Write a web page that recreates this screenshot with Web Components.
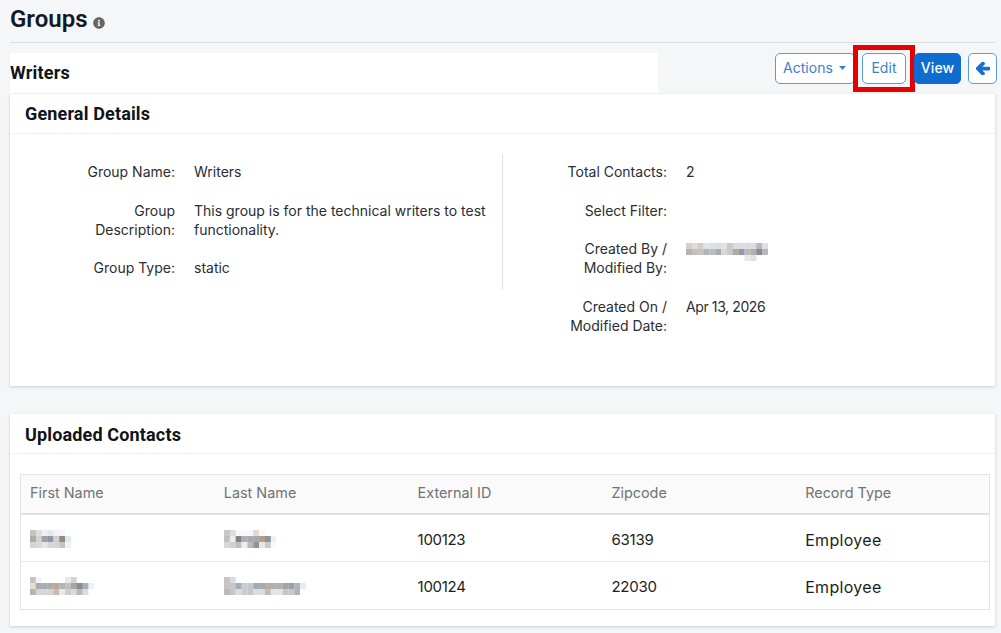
<!DOCTYPE html>
<html><head><meta charset="utf-8">
<style>
html,body{margin:0;padding:0;background:#f5f6f8;height:633px;overflow:hidden}
body{font-family:"Inter","Open Sans",sans-serif}
</style></head><body>
<template id="t-page"><style>
:host{display:block;padding:0 6px 0 10px}
.head{height:42px;border-bottom:1px solid #dcdde0;display:flex;align-items:flex-start;gap:6px}
h1{margin:3px 0 0;font:600 24px/32px Roboto,sans-serif;color:#111827}
.sub{display:flex;margin-top:10px;height:40px;justify-content:space-between;align-items:flex-start}
.title{width:648px;height:40px;background:#fff;display:flex;align-items:center;font:700 18px/22px Roboto,sans-serif;color:#101418;letter-spacing:.2px}
.btns{display:flex;align-items:center;margin-right:-2px}
svg.i{margin-top:17px}
</style>
<div class="head"><h1>Groups</h1><svg class="i" width="12" height="12" viewBox="0 0 512 512"><path fill="#666" d="M256 8C119 8 8 119 8 256s111 248 248 248 248-111 248-248S393 8 256 8zm0 110a42 42 0 1 1 0 84 42 42 0 0 1 0-84zm56 254c0 7-5 12-12 12h-88c-7 0-12-5-12-12v-24c0-7 5-12 12-12h12v-64h-12c-7 0-12-5-12-12v-24c0-7 5-12 12-12h64c7 0 12 5 12 12v100h12c7 0 12 5 12 12z"/></svg></div>
<div class="sub"><div class="title"><slot name="title"></slot></div><div class="btns"><slot name="btns"></slot></div></div>
<slot></slot></template>

<template id="t-btn"><style>
:host{display:inline-flex;position:relative;align-items:center;justify-content:center;box-sizing:border-box;height:31px;padding-bottom:1px;border:1px solid #5b9bdc;border-radius:5px;background:#fff;color:#3a7fd0;font:400 14px/1 Inter,sans-serif;letter-spacing:.05px}
:host([primary]){background:#0f6cd0;border-color:#0f6cd0;color:#fff;font-weight:500}
:host([mark])::after{content:"";position:absolute;left:-10px;right:-10px;top:-9px;bottom:-9px;border:5px solid #e60000;pointer-events:none}
</style><slot></slot></template>

<template id="t-card"><style>
:host{display:block;background:#fff;box-shadow:0 1px 3px rgba(0,0,0,.18)}
.h{height:39px;border-bottom:1px solid #eef0f2;padding-left:15px;display:flex;align-items:center;font:700 18px/24px Roboto,sans-serif;color:#101418;letter-spacing:.15px}
</style><div class="h"><slot name="h"></slot></div><slot></slot></template>

<template id="t-row"><style>
:host{display:grid;grid-template-columns:165px 1fr;column-gap:19px;font:400 14px/19px Inter,sans-serif;color:#2a2d33;margin-bottom:var(--mb,20px)}
.l{text-align:right}
.v{min-height:19px}
</style><div class="l"><slot name="l"></slot></div><div class="v"><slot></slot></div></template>

<template id="t-px"><style>:host{display:inline-block;line-height:0;vertical-align:top}svg{display:block}</style><svg></svg></template>

<template id="t-table"><style>
:host{display:block;margin:20px 5px 16px 10px;border:1px solid #e3e4e6;font:400 16px/20px Inter,sans-serif;color:#1c1e22}
</style><slot></slot></template>

<template id="t-tr"><style>
:host{display:grid;grid-template-columns:repeat(5,193.8px);align-items:center;height:42px;padding:4px 0 0 9px;border-bottom:1px solid #e6e7e9}
:host([head]){height:36px;padding:0 0 2px 9px;background:#fafafa;border-bottom:2px solid #dfe0e2;color:#6f7277;font-size:14.4px}
:host(:last-child){border-bottom-color:transparent}
</style><slot></slot></template>

<x-page>
<span slot="title">Writers</span>
<x-btn slot="btns" style="width:80px">Actions&nbsp;<svg width="8" height="4" viewBox="0 0 8 4" style="margin-left:2px"><path d="M0 0h7L3.500 4z" fill="#3a7fd0"/></svg></x-btn>
<x-btn slot="btns" mark style="width:44px;margin-left:7px">Edit</x-btn>
<x-btn slot="btns" primary style="width:47px;margin-left:8px">View</x-btn>
<x-btn slot="btns" style="width:29px;margin-left:7px"><svg width="14" height="13" viewBox="0 0 448 448"><path fill="#1670d3" stroke="#1670d3" stroke-width="50" stroke-linejoin="round" d="M257 417l-22 22c-9 9-25 9-34 0L7 245c-9-9-9-25 0-34L201 17c9-9 25-9 34 0l22 22c10 10 9 25 0 35L137 188h287c13 0 24 11 24 24v32c0 13-11 24-24 24H137l120 114c9 10 10 25 0 35z"/></svg></x-btn>

<x-card style="margin-top:1px;height:292px">
<span slot="h">General Details</span>
<div style="display:flex;padding-top:20px">
<div style="width:493px;height:135px;border-right:1px solid #dfe0e2;box-sizing:border-box;padding-top:8px">
<x-row><span slot="l">Group Name:</span>Writers</x-row>
<x-row style="--mb:19px"><span slot="l">Group<br>Description:</span>This group is for the technical writers to test<br>functionality.</x-row>
<x-row><span slot="l">Group Type:</span>static</x-row>
</div>
<div style="padding-top:8px;margin-left:-1px">
<x-row><span slot="l">Total Contacts:</span>2</x-row>
<x-row style="--mb:19px"><span slot="l">Select Filter:</span></x-row>
<x-row><span slot="l">Created By /<br>Modified By:</span><x-px style="margin-top:4px" data-s="d4d0cc,dcdcdc,d4cccc,e0e4e4,dce0e4,dcdcdc,e4e0dc,c4ccd0,dcdcdc,dcdce0,dcdcdc,dcdcdc,b8b8c0,dce0e4|b8b4ac,c4c0bc,c4c4c4,acb8c0,c0bcbc,a8acb4,d8d8d0,c4ccd0,b0aca4,8c9cb0,c0b8b4,b0b0b0,8c8c90,b4b8b8|fff,fff,fff,fff,fff,fff,fff,fff,fff,fff,e8e8e8,e0e0e8"></x-px></x-row>
<x-row style="--mb:0"><span slot="l">Created On /<br>Modified Date:</span><span style="letter-spacing:-.4px">Apr 13, 2026</span></x-row>
</div>
</div>
</x-card>

<x-card style="margin-top:28px;height:212px">
<span slot="h" style="padding-top:2px">Uploaded Contacts</span>
<x-table>
<x-tr head><span>First Name</span><span>Last Name</span><span>External ID</span><span>Zipcode</span><span>Record Type</span></x-tr>
<x-tr><span><x-px data-s="c4c2c0,dcdfe2,f0eff2,e6e6ee,f2f2f4,f6f6f6,fff|aeaaa8,d4d2d0,9ea2a8,8e96a8,d0d0d0,8e8a88,dce8f2|d4d4d4,d8d8d8,e6e6ea,d4d6dc,d4d4d4,c4c4c6,eef2f8"></x-px></span><span><x-px data-s="c8c8c8,d8dce0,f8f8f8,f8f8f8,f8f8f8,e0d8d4,f8f8f8,fff,fff|c0c0c4,f0ece4,808488,a8b0b0,a8a8b0,a8a8a8,b0a090,909498,e8f2f6|d8d8d8,d0d0d0,c0c0c0,e8eef2,c0b8b0,8c9498,ece8e0,c8ccd0,fafafc"></x-px></span><span style="letter-spacing:-.3px;font-size:15px">100123</span><span style="letter-spacing:-.2px;font-size:15px">63139</span><span style="letter-spacing:.3px">Employee</span></x-tr>
<x-tr><span><x-px data-s="c8c4c2,f2f6fa,fff,fff,fff,fff,e8e8e8,d4d4d4,fff,fff,fff|e8dccc,a8aab0,a8aab4,aeaaaa,b8a89c,b4b4b4,b8c4c8,a8a4a0,888c94,a8b0b8,eef0f4|b8b4b0,d4d4d4,d4d6da,d4d4d6,ccb8ac,ece8e4,c4d0d4,dcd8d4,b8b8bc,d8dce4,fff"></x-px></span><span><x-px data-s="c8c4c4,d8dce4,fff,fff,fff,fff,fff,fff,fff,fff,fff,fff,fff,fff|c8c4c4,c8c8c4,a8acb4,c8ccd8,c4c8d4,a8a8b0,a8a8b0,b8acac,b0b0b0,b0b0b0,a0a4a8,9ca0a0,b4b4b8,e4ecf4|bcb8bc,c4c8cc,dcdce4,ccccc8,c4c8d0,dcdce4,dcdce4,c8b8b4,e4e4e0,e4e4e4,c4c8cc,c4c8cc,b0b4b8,fff"></x-px></span><span style="letter-spacing:-.3px;font-size:15px">100124</span><span style="letter-spacing:-.2px;font-size:15px">22030</span><span style="letter-spacing:.3px">Employee</span></x-tr>
</x-table>
</x-card>
</x-page>
<script>
function tpl(name,id,init){customElements.define(name,class extends HTMLElement{constructor(){super();this.attachShadow({mode:"open"}).appendChild(document.getElementById(id).content.cloneNode(true));}connectedCallback(){init&&init.call(this)}})}
tpl("x-page","t-page");tpl("x-btn","t-btn");tpl("x-card","t-card");tpl("x-row","t-row");tpl("x-table","t-table");tpl("x-tr","t-tr");
tpl("x-px","t-px",function(){
 const rows=this.dataset.s.split("|").map(r=>r.split(","));
 const p=5.85,q=6;const w=Math.max(...rows.map(r=>r.length))*p;const svg=this.shadowRoot.querySelector("svg");
 svg.setAttribute("width",w);svg.setAttribute("height",rows.length*q);
 rows.forEach((r,y)=>r.forEach((c,x)=>{const e=document.createElementNS("http://www.w3.org/2000/svg","rect");
  e.setAttribute("x",x*p);e.setAttribute("y",y*q);e.setAttribute("width",p+.2);e.setAttribute("height",q);e.setAttribute("fill","#"+c);svg.appendChild(e)}));
});
</script>
</body></html>
